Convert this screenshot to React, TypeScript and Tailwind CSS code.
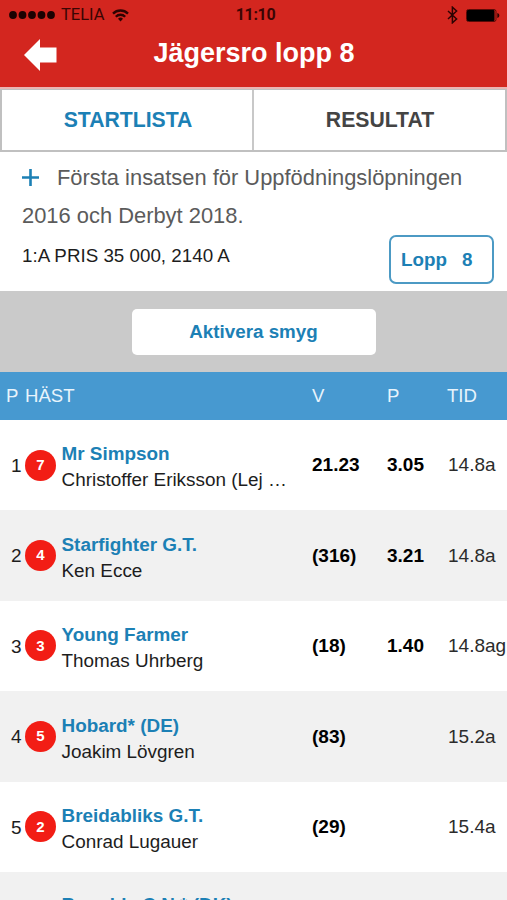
import React from 'react'

const starters = [
  { place: 1, nr: 7, horse: 'Mr Simpson', driver: 'Christoffer Eriksson (Lej …', v: '21.23', p: '3.05', time: '14.8a' },
  { place: 2, nr: 4, horse: 'Starfighter G.T.', driver: 'Ken Ecce', v: '(316)', p: '3.21', time: '14.8a' },
  { place: 3, nr: 3, horse: 'Young Farmer', driver: 'Thomas Uhrberg', v: '(18)', p: '1.40', time: '14.8ag' },
  { place: 4, nr: 5, horse: 'Hobard* (DE)', driver: 'Joakim Lövgren', v: '(83)', p: '', time: '15.2a' },
  { place: 5, nr: 2, horse: 'Breidabliks G.T.', driver: 'Conrad Lugauer', v: '(29)', p: '', time: '15.4a' },
]

const StatusBar = () => {
  return (
    <div className="h-[30px] grid grid-cols-3 items-center text-[#3a0503]">
      <div className="flex items-center pl-[9px]">
        <svg width="46" height="8" viewBox="0 0 46 8" fill="#1c0202">
          <circle cx="4" cy="4" r="3.9" />
          <circle cx="13.5" cy="4" r="3.9" />
          <circle cx="23" cy="4" r="3.9" />
          <circle cx="32.5" cy="4" r="3.9" />
          <circle cx="42" cy="4" r="3.9" />
        </svg>
        <span className="ml-[6px] w-[44px] text-[16.5px] leading-none font-[Roboto]">TELIA</span>
        <svg className="ml-[7px]" width="17" height="13" viewBox="0 0 17 13" fill="none" stroke="#2c0302" strokeWidth="2.3">
          <path d="M1 4.6a10.6 10.6 0 0 1 15 0" />
          <path d="M3.8 7.7a6.7 6.7 0 0 1 9.4 0" />
          <path d="M8.5 12.4L6 9.8a3.6 3.6 0 0 1 5 0Z" fill="#2c0302" stroke="none" />
        </svg>
      </div>
      <div className="text-center pl-[4px] text-[16px] leading-none font-bold font-[Roboto] tracking-[-0.3px]">11:10</div>
      <div className="flex justify-end items-center pr-[7px]">
        <svg width="11" height="18" viewBox="0 0 11 18" fill="none" stroke="#2c0302" strokeWidth="1.5">
          <path d="M1 5l8.6 8L5.4 16.8V1.2L9.6 5 1 13" />
        </svg>
        <svg className="ml-[8px]" width="34" height="13" viewBox="0 0 34 13">
          <rect x="0.5" y="0.5" width="29.5" height="12" rx="2" fill="none" stroke="#5a0a06" />
          <rect x="1" y="1" width="27.5" height="11" rx="1" fill="#000" />
          <path d="M31.3 4c1.6.5 2 1.5 2 2.5s-.4 2-2 2.5Z" fill="#2c0302" />
        </svg>
      </div>
    </div>
  )
}

const Header = () => {
  return (
    <header className="h-[87px] bg-[#d3261f]">
      <StatusBar />
      <div className="h-[46px] grid grid-cols-[1fr_auto_1fr] items-center pl-px">
        <svg className="ml-[23px] mt-[3px]" width="33" height="32" viewBox="0 0 33 32" fill="#fff">
          <path d="M0 16L16 0v8.5h16.5v15H16V32Z" />
        </svg>
        <h1 className="text-[27px] leading-none font-bold text-white">Jägersro lopp 8</h1>
      </div>
    </header>
  )
}

const App = () => {
  return (
    <div className="w-[507px] h-[900px] overflow-hidden bg-white font-['Liberation_Sans',Arial,sans-serif] text-[19px] text-[#1d1d1d]">
      <Header />

      <div className="h-[65px] border-t-2 border-t-[#eab5b3]">
        <div className="h-[63px] flex border-2 border-t border-[#c0c0c0] text-[21.2px] font-bold">
          <div className="w-[252px] flex items-center justify-center pl-[2px] border-r-2 border-[#c8c8c8] text-[#1c80b5]">STARTLISTA</div>
          <div className="flex-1 flex items-center justify-center pl-px text-[#444]">RESULTAT</div>
        </div>
      </div>

      <section className="h-[139px] pt-[7px] pl-[22px]">
        <p className="text-[21.9px] leading-[38px] text-[#5b5b5b]">
          <svg className="inline-block align-[-1px] mr-[18px]" width="17" height="17" viewBox="0 0 17 17" stroke="#1c80b5" strokeWidth="2.6">
            <path d="M8.5 0v17M0 8.5h17" />
          </svg>
          Första insatsen för Uppfödningslöpningen
          <br />
          2016 och Derbyt 2018.
        </p>
        <div className="flex justify-between items-start pr-[13px]">
          <p className="pt-[10px] leading-[22px] text-[18.8px]">1:A PRIS 35 000, 2140 A</p>
          <div className="w-[105px] h-[49px] flex items-center pt-px pl-[10px] border-2 border-[#4c9ac4] rounded-[7px] font-bold text-[18.8px] text-[#1c80b5]">
            Lopp <span className="ml-[15px]">8</span>
          </div>
        </div>
      </section>

      <div className="h-[81px] bg-[#cacaca] flex items-center justify-center">
        <button className="w-[244px] h-[46px] pt-[2px] bg-white rounded-[5px] font-bold text-[18.8px] text-[#1c80b5]">Aktivera smyg</button>
      </div>

      <div className="h-[48px] grid grid-cols-[19px_287px_75px_60px_1fr] items-center pl-[6px] bg-[#4799d0] text-[#e8f4fc] text-[18.6px]">
        <span>P</span>
        <span>HÄST</span>
        <span>V</span>
        <span>P</span>
        <span>TID</span>
      </div>

      <div>
        {starters.map((s) => (
          <div key={s.place} className="h-[90.4px] grid grid-cols-[14px_31px_256px_75px_61px_1fr] items-center pl-[11px] even:bg-[#f1f1f1] whitespace-nowrap">
            <span className="pt-[2px]">{s.place}</span>
            <span className="w-[31px] h-[31px] rounded-full bg-[#f21d15] flex items-center justify-center text-[15px] font-bold text-white">{s.nr}</span>
            <div className="pl-[5.5px] leading-[26px] mt-[4.5px] text-[18.9px]">
              <div className="font-bold text-[#1c80b5]">{s.horse}</div>
              <div>{s.driver}</div>
            </div>
            <span className="pt-px font-bold text-black">{s.v}</span>
            <span className="pt-px font-bold text-black">{s.p}</span>
            <span className="pt-px text-[#2b2b2b]">{s.time}</span>
          </div>
        ))}
      </div>
      {/* next starter, only its top edge is on screen */}
      <div className="h-[90px] bg-[#f1f1f1] pl-[61.5px] pt-[20.5px] leading-[26px] text-[18.9px] font-bold text-[#1c80b5]">Bramble C.N.* (DK)</div>
    </div>
  )
}

export default App
